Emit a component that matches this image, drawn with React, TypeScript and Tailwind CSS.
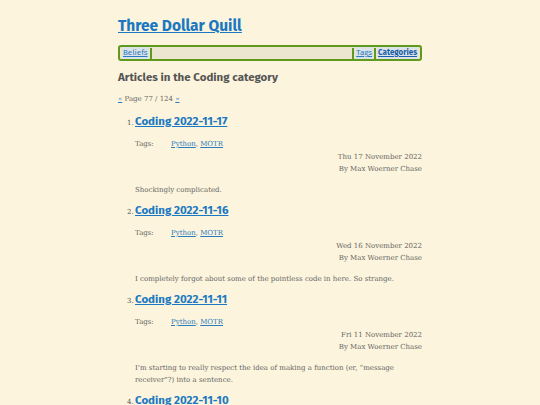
import React from "react";

const articles = [
  {
    n: 1,
    title: "Coding 2022-11-17",
    date: "Thu 17 November 2022",
    summary: "Shockingly complicated.",
  },
  {
    n: 2,
    title: "Coding 2022-11-16",
    date: "Wed 16 November 2022",
    summary: "I completely forgot about some of the pointless code in here. So strange.",
  },
  {
    n: 3,
    title: "Coding 2022-11-11",
    date: "Fri 11 November 2022",
    summary:
      "I\u2019m starting to really respect the idea of making a function (er, \u201cmessage receiver\u201d?) into a sentence.",
  },
  {
    n: 4,
    title: "Coding 2022-11-10",
    date: "Thu 10 November 2022",
    summary: "More stuff.",
  },
];

const sans = "font-['Fira_Sans','Open_Sans','Noto_Sans',sans-serif]";
const serif = "font-['DejaVu_Serif','Liberation_Serif',serif]";

export default function App() {
  return (
    <div className="h-[405px] bg-[#fcf4dc] text-[#555] overflow-hidden">
      <div className="w-[304px] mx-auto pt-[15px]">
        <h1 className={`${sans} text-[15.5px] font-bold leading-[22px] text-[#1a78c2] underline`}>
          <a href="#">Three Dollar Quill</a>
        </h1>
        <nav className={`${sans} mt-[8px] h-[16px] flex items-center border-2 border-[#5f9a1c] rounded-[3px] bg-[#ece5cf] text-[8px] px-[2px]`}>
          <a href="#" className="text-[#2a7cc0] underline bg-[#dbe3e8] px-[1px]">Beliefs</a>
          <span className="w-[2px] h-[11px] bg-[#5f9a1c] ml-[1px]" />
          <span className="flex-1" />
          <span className="w-[2px] h-[11px] bg-[#5f9a1c] mr-[1px]" />
          <a href="#" className="text-[#2a7cc0] underline bg-[#dbe3e8] px-[1px]">Tags</a>
          <span className="w-[2px] h-[11px] bg-[#5f9a1c] mx-[1px]" />
          <a href="#" className="text-[#1a5ea8] font-bold underline bg-[#dbe3e8] px-[1px]">Categories</a>
        </nav>
        <h2 className={`${sans} mt-[8px] text-[11.5px] font-bold leading-[16px] text-[#555]`}>
          Articles in the Coding category
        </h2>
        <p className={`${serif} mt-[9px] text-[7px] leading-[10px] text-[#666]`}>
          <a href="#" className="text-[#2a7cc0] underline">«</a> Page 77 / 124{" "}
          <a href="#" className="text-[#2a7cc0] underline">»</a>
        </p>
        <ol className="mt-[9px] pl-[17px]">
          {articles.map((a) => (
            <li key={a.n} className="mb-[6px]">
              <div className="flex items-baseline">
                <span className={`${serif} text-[7px] text-[#555] w-[7px] -ml-[8px] mr-[1px]`}>{a.n}.</span>
                <a href="#" className={`${sans} text-[11.5px] font-bold leading-[16px] text-[#1a78c2] underline`}>
                  {a.title}
                </a>
              </div>
              <div className={`${serif} text-[7px] text-[#666] mt-[10px] flex leading-[10px]`}>
                <span className="w-[36px]">Tags:</span>
                <span>
                  <a href="#" className="text-[#2a7cc0] underline">Python</a>,{" "}
                  <a href="#" className="text-[#2a7cc0] underline">MOTR</a>
                </span>
              </div>
              <div className={`${serif} text-[7px] text-[#666] text-right leading-[12px] mt-[2px]`}>
                <div>{a.date}</div>
                <div>By Max Woerner Chase</div>
              </div>
              <p className={`${serif} text-[7px] text-[#666] leading-[12px] mt-[9px]`}>{a.summary}</p>
            </li>
          ))}
        </ol>
      </div>
    </div>
  );
}
